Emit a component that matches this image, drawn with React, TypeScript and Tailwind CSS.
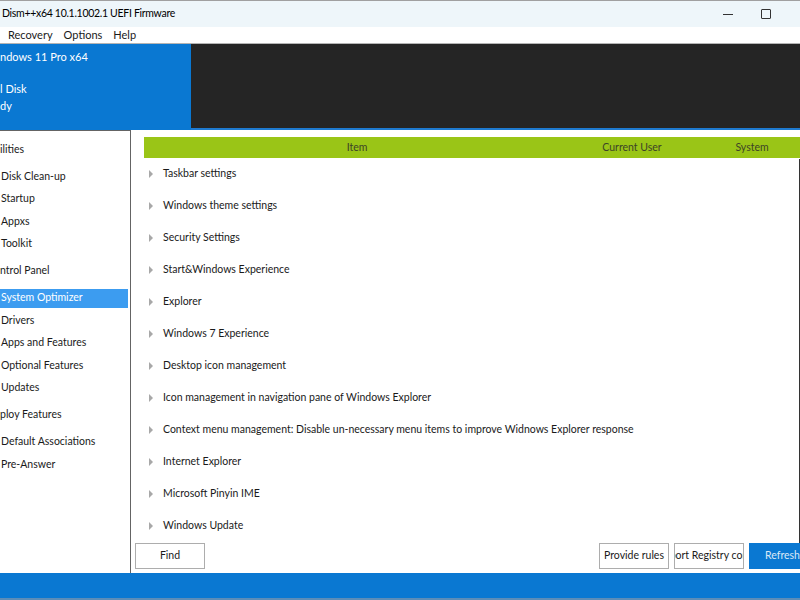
import React from 'react';

const FONT = { fontFamily: 'Lato, "Segoe UI", "Open Sans", sans-serif' };

const sidebar: { label: string; header?: boolean; selected?: boolean }[] = [
  { label: 'ilities', header: true },
  { label: 'Disk Clean-up' },
  { label: 'Startup' },
  { label: 'Appxs' },
  { label: 'Toolkit' },
  { label: 'ntrol Panel', header: true },
  { label: 'System Optimizer', selected: true },
  { label: 'Drivers' },
  { label: 'Apps and Features' },
  { label: 'Optional Features' },
  { label: 'Updates' },
  { label: 'ploy Features', header: true },
  { label: 'Default Associations' },
  { label: 'Pre-Answer' },
];

const treeItems = [
  'Taskbar settings',
  'Windows theme settings',
  'Security Settings',
  'Start&Windows Experience',
  'Explorer',
  'Windows 7 Experience',
  'Desktop icon management',
  'Icon management in navigation pane of Windows Explorer',
  'Context menu management: Disable un-necessary menu items to improve Widnows Explorer response',
  'Internet Explorer',
  'Microsoft Pinyin IME',
  'Windows Update',
];

export default function App() {
  return (
    <div
      className="w-[800px] h-[600px] overflow-hidden flex flex-col bg-white text-[10.5px] text-[#1a1a1a]"
      style={FONT}
    >
      {/* Title bar */}
      <div className="h-[27px] shrink-0 flex items-center border-t border-[#a0a0a0] bg-[#eef6fa]">
        <span className="pl-[2px] text-[10.5px] tracking-[-0.3px] text-black">
          Dism++x64 10.1.1002.1 UEFI Firmware
        </span>
        <div className="ml-auto flex items-center h-full">
          <div className="w-[38px] h-full flex items-center justify-center">
            <div className="w-[10px] h-px bg-[#333]" />
          </div>
          <div className="w-[38px] h-full flex items-center justify-center mr-[15px]">
            <div className="w-[10px] h-[10px] border border-[#333] rounded-[1px]" />
          </div>
        </div>
      </div>

      {/* Menu bar */}
      <div className="h-[17px] shrink-0 flex items-center gap-[11px] pl-[8px] bg-white border-b border-[#b4b4b4] text-[11px]">
        <span>Recovery</span>
        <span>Options</span>
        <span>Help</span>
      </div>

      {/* Header */}
      <div className="h-[86px] shrink-0 flex">
        <div className="w-[191px] bg-[#0a78d2] text-white pt-[5px] flex flex-col text-[11px]">
          <span className="leading-[16px]">ndows 11 Pro x64</span>
          <span className="leading-[16px] mt-[16px]">l Disk</span>
          <span className="leading-[16px] mt-px">dy</span>
        </div>
        <div className="flex-1 bg-[#252525] border-b-2 border-[#1e7ad0]" />
      </div>

      {/* Body */}
      <div className="flex-1 flex min-h-0">
        {/* Sidebar */}
        <div className="w-[131px] shrink-0 border-t border-r border-[#646464] pt-[3px]">
          {sidebar.map((s) => (
            <div
              key={s.label}
              className={`h-[22.5px] flex items-center whitespace-nowrap ${
                s.header ? 'my-[4.5px]' : ''
              }`}
            >
              <div
                className={`h-[19px] w-[128px] flex items-center ${
                  s.header ? 'pl-0' : 'pl-px'
                } ${s.selected ? 'bg-[#3c9cf0] text-white' : ''}`}
              >
                {s.label}
              </div>
            </div>
          ))}
        </div>

        {/* Right panel */}
        <div className="flex-1 flex flex-col min-w-0 relative pl-[13px] pt-[7px]">
          <div className="h-[21px] shrink-0 bg-[#9ac517] flex items-center text-[#3d4327] whitespace-nowrap">
            <div className="w-[426px] text-center">Item</div>
            <div className="w-[124px] text-center">Current User</div>
            <div className="flex-1 text-center pl-[10px]">System</div>
          </div>
          <div className="absolute right-0 top-[29px] w-px h-[384px] bg-[#333]" />
          <div className="flex-1 flex flex-col">
            {treeItems.map((t) => (
              <div key={t} className="h-[32px] shrink-0 flex items-center whitespace-nowrap">
                <svg width="5" height="8" viewBox="0 0 5 8" className="ml-[5px] mr-[9px] shrink-0">
                  <path d="M0 0 L4 4 L0 8 Z" fill="#a8a8a8" />
                </svg>
                <span>{t}</span>
              </div>
            ))}
          </div>
          <div className="h-[30px] shrink-0 flex items-start gap-[5px] -ml-[9px]">
            <button className="w-[70px] h-[26px] border border-[#adadad] bg-white">Find</button>
            <div className="flex-1" />
            <button className="w-[70px] h-[26px] border border-[#adadad] bg-white whitespace-nowrap">
              Provide rules
            </button>
            <button className="w-[70px] h-[26px] border border-[#adadad] bg-white overflow-hidden flex items-center justify-center whitespace-nowrap">
              <span>Export Registry config</span>
            </button>
            <button className="w-[51px] h-[26px] bg-[#0a78d2] text-[#dbe9f7] text-left pl-[16px] whitespace-nowrap overflow-hidden">
              Refresh
            </button>
          </div>
        </div>
      </div>

      {/* Status bar */}
      <div className="h-[27px] shrink-0 bg-[#0a78d2] border-b-2 border-[#5c8db8]" />
    </div>
  );
}
